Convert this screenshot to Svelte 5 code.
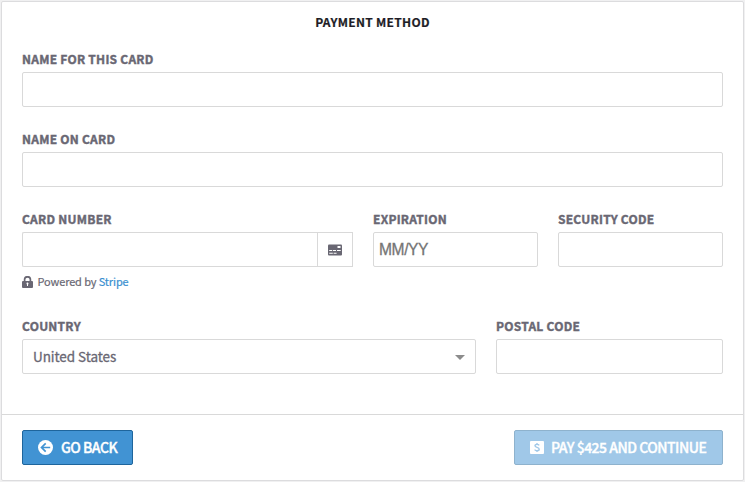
<script>
  let nameFor = $state('');
  let nameOn = $state('');
  let postal = $state('');
</script>

<div class="page">
  <section class="panel">
    <form class="body">
      <h1>PAYMENT METHOD</h1>
      <div class="row">
        <label class="wide"><span>NAME FOR THIS CARD</span><input bind:value={nameFor} /></label>
      </div>
      <div class="row">
        <label class="wide"><span>NAME ON CARD</span><input bind:value={nameOn} /></label>
      </div>
      <div class="row third">
        <div class="number">
          <label for="card"><span>CARD NUMBER</span></label>
          <div class="group">
            <input id="card" />
            <div class="addon">
              <svg width="14" height="12" viewBox="0 0 14 12">
                <rect width="14" height="11" y=".5" rx="1" fill="#696773" />
                <path d="M9.5 2h3v2h-3zM1.200 6h3v1h-3zM5 6h3v1H5zM9 6h3.700v1H9zM1.200 8.800h3.600v1H1.200zM5.600 8.800h3v1h-3z" fill="#fff" />
              </svg>
            </div>
          </div>
          <p class="powered">
            <svg width="11" height="12" viewBox="0 0 11 12">
              <path d="M2.6 6V3.600a2.900 2.800 0 0 1 5.800 0V6" fill="none" stroke="#696773" stroke-width="1.7" />
              <rect y="5" width="11" height="7" rx="1" fill="#696773" />
              <path d="M4.500 7.600a1 1 0 1 1 1.500.8v1.700H5V8.400a1 1 0 0 1-.5-.8z" fill="#fff" />
            </svg>
            <span class="by">Powered by <a href="#stripe">Stripe</a></span>
          </p>
        </div>
        <label class="small"><span>EXPIRATION</span><input class="exp" placeholder="MM/YY" /></label>
        <label class="small"><span>SECURITY CODE</span><input /></label>
      </div>
      <div class="row">
        <div class="country">
          <label for="country"><span>COUNTRY</span></label>
          <button type="button" id="country" class="select">
            <span>United States</span>
            <svg width="10" height="5" viewBox="0 0 10 5"><path d="M0 0h10L5 5z" fill="#8c8c8c" /></svg>
          </button>
        </div>
        <label class="postal"><span>POSTAL CODE</span><input bind:value={postal} /></label>
      </div>
    </form>
    <footer>
      <button class="btn back">
        <svg width="15" height="15" viewBox="0 0 15 15">
          <circle cx="7.5" cy="7.5" r="7.5" fill="#fff" />
          <path d="M12.200 7.500H3.500M7.700 3.300L3.500 7.500l4.200 4.200" fill="none" stroke="#4193d3" stroke-width="1.7" />
        </svg>
        <span>GO BACK</span>
      </button>
      <button class="btn pay" disabled>
        <svg width="14" height="13" viewBox="0 0 14 13">
          <rect width="14" height="13" rx="1" fill="#fff" />
          <path d="M9.200 4.400C8.700 3.700 7.900 3.400 7 3.400c-1.200 0-2 .5-2 1.400C5 6.900 9.200 5.900 9.200 8.200c0 1-.9 1.500-2.200 1.500-1 0-1.800-.4-2.400-1.100M7 2v1.400M7 9.700v1.400" fill="none" stroke="#a0c8e8" stroke-width="1.4" />
        </svg>
        <span>PAY $425 AND CONTINUE</span>
      </button>
    </footer>
  </section>
</div>

<style>
  :global(body) { background: #f0f0f1; }
  .page {
    box-sizing: border-box;
    width: 745px;
    height: 482px;
    padding: 1px;
    font-family: "Noto Sans CJK SC", "Open Sans", sans-serif;
    color: #696773;
  }
  .panel {
    box-sizing: border-box;
    width: 743px;
    height: 480px;
    background: #fff;
    border: 1px solid #dcdcde;
    border-radius: 2px;
    display: flex;
    flex-direction: column;
  }
  .body { height: 412px; padding: 0 20px; }
  h1 {
    margin: 0;
    padding-top: 10px;
    height: 47px;
    box-sizing: border-box;
    text-align: center;
    font-size: 12px;
    letter-spacing: 0.28px;
    line-height: 20px;
    font-weight: 700;
    color: #1e1d26;
    -webkit-text-stroke: 0.2px;
  }
  .row { display: flex; gap: 20px; height: 80px; }
  .third { height: 107px; }
  label { display: block; }
  label > span {
    display: block;
    height: 23px;
    line-height: 20px;
    font-size: 12px;
    font-weight: 700;
    letter-spacing: 0.25px;
    white-space: nowrap;
    -webkit-text-stroke: 0.4px;
  }
  input, .select {
    display: block;
    box-sizing: border-box;
    width: 100%;
    height: 35px;
    margin: 0;
    border: 1px solid #d9d9d9;
    border-radius: 2px;
    background: #fff;
    outline: none;
  }
  .wide { width: 701px; }
  .number { width: 331px; }
  .group { display: flex; }
  .group input { width: 296px; border-right: 0; border-radius: 2px 0 0 2px; }
  .addon {
    box-sizing: border-box;
    width: 36px;
    height: 35px;
    flex: none;
    margin-left: -1px;
    border: 1px solid #d9d9d9;
    display: flex;
    align-items: center;
    justify-content: center;
  }
  .powered { margin: 6px 0 0; display: flex; align-items: center; gap: 4.5px; height: 18px; }
  .by { font-size: 11px; line-height: 18px; margin-top: -2px; letter-spacing: -0.13px; -webkit-text-stroke: 0.2px; }
  a { color: #3a90d0; text-decoration: none; }
  .small { width: 165px; }
  .exp { padding: 1px 5px 0; font: 15.6px "Liberation Sans", Arial, sans-serif; letter-spacing: -0.4px; }
  .exp::placeholder { color: #757575; opacity: 1; -webkit-text-stroke: 0.3px; }
  .country { width: 454px; }
  .postal { width: 227px; }
  .select {
    display: flex;
    align-items: center;
    justify-content: space-between;
    padding: 0 10px;
    font: 13.5px/20px "Noto Sans CJK SC", "Open Sans", sans-serif;
    letter-spacing: -0.05px;
    color: #696773;
    text-align: left;
  }
  .select span { -webkit-text-stroke: 0.3px; margin-top: -2px; }
  .select svg { margin-top: 1px; }
  footer {
    height: 66px;
    box-sizing: border-box;
    border-top: 1px solid #d9d9d9;
    padding: 15px 20px 0;
    display: flex;
    justify-content: space-between;
  }
  .btn {
    display: flex;
    box-sizing: border-box;
    height: 35px;
    align-items: center;
    padding: 0 0 0 15px;
    gap: 8px;
    border: 1px solid #1e659c;
    border-radius: 2px;
    background: #4193d3;
    color: #fff;
    font: 500 14px/20px "Noto Sans CJK SC", "Open Sans", sans-serif;
    letter-spacing: -0.5px;
    white-space: nowrap;
  }
  .btn span { margin-top: -1px; -webkit-text-stroke: 0.35px; }
  .back { width: 111px; }
  .pay { width: 209px; background: #a0c8e8; border-color: #8eb2cd; gap: 7px; }
</style>
